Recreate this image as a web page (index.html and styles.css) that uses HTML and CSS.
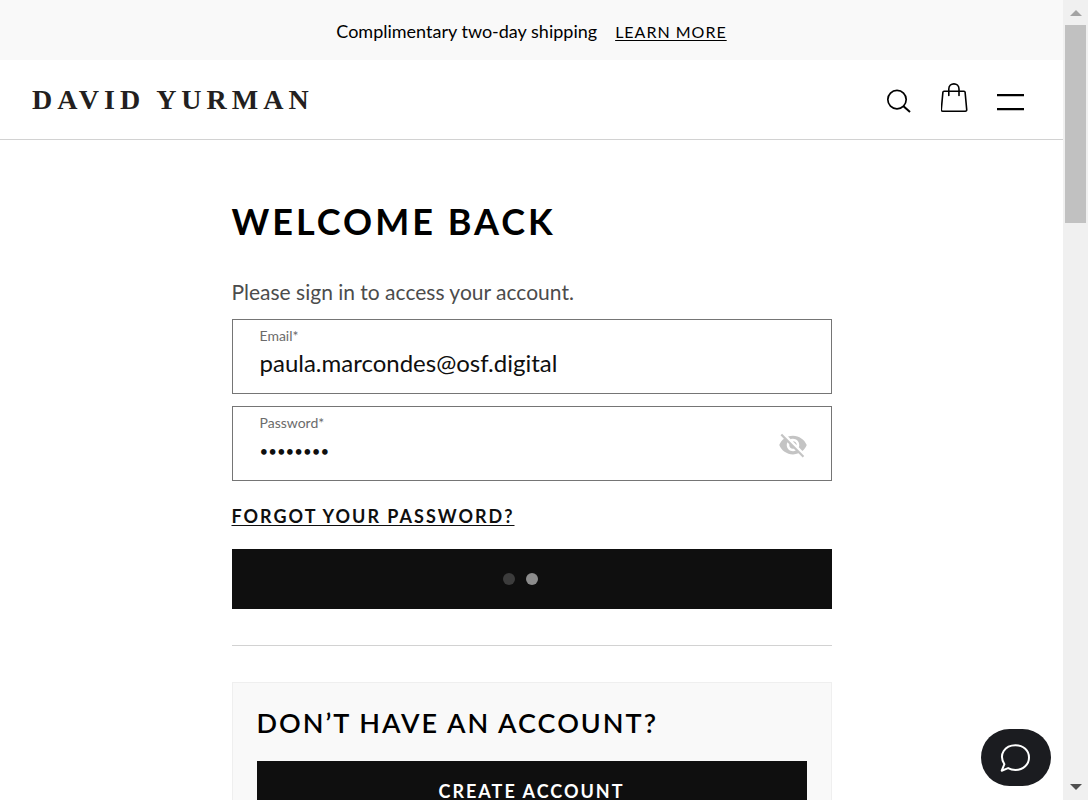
FILE: index.html
```html
<!DOCTYPE html>
<html lang="en">
<head>
<meta charset="utf-8">
<meta name="viewport" content="width=device-width, initial-scale=1">
<title>Sign in | David Yurman</title>
<link rel="stylesheet" href="styles.css">
</head>
<body>
<div class="window">
  <div class="page">
    <div class="promo">
      <span>Complimentary two-day shipping</span>
      <a class="promo-link" href="#">LEARN MORE</a>
    </div>
    <header class="header">
      <a class="logo" href="#">DAVID YURMAN</a>
      <nav class="tools" aria-label="Site tools">
        <button class="icon-button" type="button" aria-label="Search">
          <svg width="28" height="32" viewBox="0 0 28 32" fill="none" stroke="#000" stroke-width="1.7"><circle cx="12" cy="17.600" r="9.200"/><path d="M18.500 24.200 25 30" stroke-width="2"/></svg>
        </button>
        <button class="icon-button" type="button" aria-label="Shopping bag">
          <svg width="28" height="32" viewBox="1 0 28 32" fill="none" stroke="#000" stroke-width="1.600" stroke-linejoin="round" stroke-linecap="round"><path d="M4 9.300H24Q24.900 9.300 25.100 10.200L26.700 27.500Q26.800 29.200 25.300 29.200H2.700Q1.200 29.200 1.300 27.500L2.900 10.200Q3.100 9.300 4 9.300Z"/><path d="M8.800 13.500V7C8.800.100 19 .100 19 7V13.500"/></svg>
        </button>
        <button class="icon-button" type="button" aria-label="Menu">
          <svg width="28" height="32" viewBox="0 0 28 32"><path d="M0 12h27v2.300H0zM0 26h27v2.300H0z"/></svg>
        </button>
      </nav>
    </header>
    <main class="main">
      <h1 class="title">WELCOME BACK</h1>
      <p class="intro">Please sign in to access your account.</p>
      <form class="form">
        <div class="field">
          <label class="label" for="email">Email*</label>
          <input class="input" id="email" type="email" value="paula.marcondes@osf.digital">
        </div>
        <div class="field">
          <label class="label" for="password">Password*</label>
          <input class="input input-password" id="password" type="password" value="password">
          <button class="reveal" type="button" aria-label="Show password">
            <svg width="30" height="30" viewBox="0 0 24 24" fill="#c4c4c4"><path d="M12 7c2.760 0 5 2.240 5 5 0 .650-.130 1.260-.360 1.830l2.920 2.920c1.510-1.260 2.700-2.890 3.430-4.750-1.730-4.390-6-7.500-11-7.500-1.400 0-2.740.250-3.980.700l2.160 2.160C10.740 7.130 11.350 7 12 7zM2 4.270l2.280 2.280.460.460C3.080 8.300 1.780 10.020 1 12c1.730 4.390 6 7.500 11 7.500 1.550 0 3.030-.300 4.380-.840l.420.420L19.730 22 21 20.730 3.270 3 2 4.270zM7.530 9.800l1.550 1.550c-.050.210-.080.430-.080.650 0 1.660 1.340 3 3 3 .220 0 .440-.030.650-.080l1.550 1.550c-.670.330-1.410.530-2.200.530-2.760 0-5-2.240-5-5 0-.790.200-1.530.530-2.200zm4.310-.780l3.150 3.150.020-.160c0-1.660-1.340-3-3-3l-.170.010z"/></svg>
          </button>
        </div>
        <a class="forgot" href="#">FORGOT YOUR PASSWORD?</a>
        <button class="button button-loading" type="submit" aria-label="Signing in">
          <span class="dot"></span><span class="dot dot-active"></span><span class="dot dot-hidden"></span>
        </button>
      </form>
      <hr class="rule">
      <section class="signup">
        <h2 class="subtitle">DON’T HAVE AN ACCOUNT?</h2>
        <button class="button" type="button">CREATE ACCOUNT</button>
      </section>
    </main>
  </div>
  <div class="scrollbar" aria-hidden="true">
    <svg class="arrow" width="12" height="6" viewBox="0 0 12 6" fill="#a3a3a3"><path d="M0 6 6 0l6 6z"/></svg>
    <div class="thumb"></div>
    <svg class="arrow" width="12" height="6" viewBox="0 0 12 6" fill="#505050"><path d="M0 0h12L6 6z"/></svg>
  </div>
  <button class="chat" type="button" aria-label="Chat">
    <svg width="32" height="32" viewBox="0 0 32 32" fill="none" stroke="#fff" stroke-width="2" stroke-linejoin="round"><path d="M4.400 22.200C-1.800 12.500 5 3.200 15.500 3.200c8 0 13.500 5.500 13.500 12.300s-5.500 12.400-13.500 12.400c-2.900 0-5.400-.700-7.400-1.800L1.700 28.700Z"/></svg>
  </button>
</div>
</body>
</html>
```

FILE: styles.css
```css
* { box-sizing: border-box; }

body {
  margin: 0;
  background: #fff;
  color: #000;
  font-family: Lato, "Liberation Sans", sans-serif;
}

button {
  padding: 0;
  border: 0;
  background: none;
  font-family: inherit;
  cursor: pointer;
}

.window {
  display: grid;
  grid-template-columns: minmax(0, 1fr) 25px;
  height: 100vh;
}

.page { overflow: hidden; }

.promo {
  display: flex;
  align-items: center;
  justify-content: center;
  gap: 18px;
  min-height: 60px;
  padding-top: 2px;
  background: #f9f9f9;
  font-size: 18px;
}

.promo-link {
  color: inherit;
  font-size: 16px;
  letter-spacing: 1px;
  text-underline-offset: 2px;
}

.header {
  display: flex;
  align-items: center;
  justify-content: space-between;
  min-height: 80px;
  padding: 0 38px 0 32px;
  border-bottom: 1px solid #d2d2d2;
}

.logo {
  color: #231f20;
  font-family: "Liberation Serif", serif;
  font-size: 28px;
  font-weight: 700;
  letter-spacing: 5px;
  text-decoration: none;
}

.tools {
  display: flex;
  gap: 28px;
  padding-bottom: 4px;
}

.icon-button,
.icon-button svg { display: block; }

.main {
  max-width: 600px;
  margin: 0 auto;
  padding-top: 60px;
}

.title,
.subtitle { margin: 0; }

.title {
  font-size: 36px;
  font-weight: 700;
  letter-spacing: 3px;
  line-height: 42px;
}

.intro {
  margin: 36px 0 0;
  color: #4c4c4c;
  font-size: 21px;
  line-height: 28px;
}

.form {
  display: flex;
  flex-direction: column;
  align-items: stretch;
  margin-top: 13px;
}

.field {
  position: relative;
  height: 75px;
  margin-bottom: 12px;
  padding: 7px 27px;
  border: 1px solid #757575;
}

.label {
  display: block;
  color: #6b6b6b;
  font-size: 14px;
  line-height: 18px;
}

.input {
  display: block;
  width: 100%;
  height: 34px;
  padding: 0;
  border: 0;
  outline: 0;
  background: none;
  color: #0f0f0f;
  font-family: inherit;
  font-size: 24px;
}

.input-password {
  height: 38px;
  padding-right: 50px;
  font-size: 15px;
}

.reveal {
  position: absolute;
  top: 23px;
  right: 23px;
}

.reveal svg,
.chat svg { display: block; }

.forgot {
  align-self: flex-start;
  margin: 12px 0 22px;
  color: #0f0f0f;
  font-size: 18px;
  font-weight: 700;
  letter-spacing: 2px;
  line-height: 22px;
  text-underline-offset: 2px;
}

.button {
  display: flex;
  align-items: center;
  justify-content: center;
  width: 100%;
  height: 60px;
  background: #0f0f0f;
  color: #fff;
  font-size: 18px;
  font-weight: 700;
  letter-spacing: 2px;
}

.button-loading { gap: 11px; }

.dot {
  width: 12px;
  height: 12px;
  border-radius: 50%;
  background: #3c3c3c;
}

.dot-active { background: #8c8c8c; }
.dot-hidden { visibility: hidden; }

.rule {
  margin: 36px 0;
  border: 0;
  border-top: 1px solid #d2d2d2;
}

.signup {
  padding: 24px;
  border: 1px solid #efefef;
  background: #f9f9f9;
}

.subtitle {
  margin-bottom: 22px;
  font-size: 27px;
  font-weight: 600;
  letter-spacing: 2px;
  line-height: 32px;
}

.scrollbar {
  display: flex;
  flex-direction: column;
  align-items: center;
  padding: 10px 0;
  background: #f0f0f0;
}

.thumb {
  width: 21px;
  height: 198px;
  margin: 9px 0 auto;
  background: #c1c1c1;
}

.chat {
  position: fixed;
  right: 37px;
  bottom: 14px;
  display: grid;
  place-items: center;
  width: 70px;
  height: 57px;
  border-radius: 29px;
  background: #1b1c20;
}
```
